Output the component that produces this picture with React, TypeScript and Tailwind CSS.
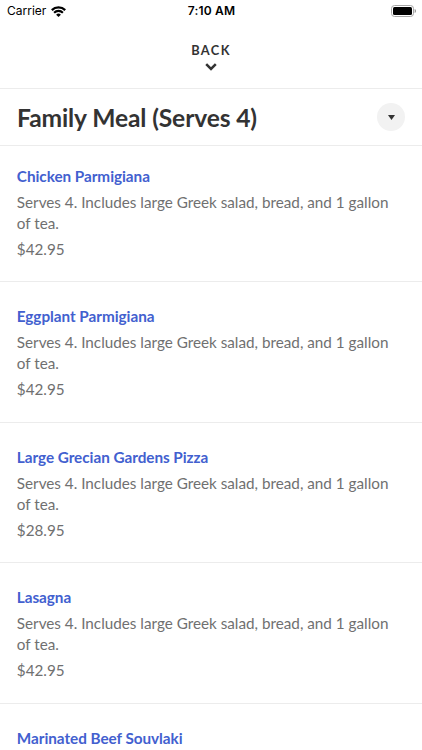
import React from "react";

interface MenuItem {
  name: string;
  description: string;
  price?: string;
}

const DESCRIPTION =
  "Serves 4. Includes large Greek salad, bread, and 1 gallon of tea.";

const MENU_ITEMS: MenuItem[] = [
  { name: "Chicken Parmigiana", description: DESCRIPTION, price: "$42.95" },
  { name: "Eggplant Parmigiana", description: DESCRIPTION, price: "$42.95" },
  { name: "Large Grecian Gardens Pizza", description: DESCRIPTION, price: "$28.95" },
  { name: "Lasagna", description: DESCRIPTION, price: "$42.95" },
  { name: "Marinated Beef Souvlaki", description: "" },
];

function WifiIcon() {
  return (
    <svg className="w-[15px] h-[11px]" viewBox="0 0 15 11" fill="none">
      <path d="M0.8 4.1a9.6 9.6 0 0 1 13.4 0" stroke="#000" strokeWidth="2.4" />
      <path d="M3.1 6.7a6.2 6.2 0 0 1 8.8 0" stroke="#000" strokeWidth="2.1" />
      <path d="M7.5 11L5.1 8.7a3.4 3.4 0 0 1 4.8 0z" fill="#000" />
    </svg>
  );
}

function BatteryIcon() {
  return (
    <svg className="w-[25px] h-[12px]" viewBox="0 0 25 12" fill="none">
      <rect x="0.5" y="0.5" width="22" height="11" rx="3" stroke="#a6a6a6" />
      <rect x="2" y="2" width="19" height="8" rx="1.5" fill="#000" />
      <path d="M23.7 4v4c.7-.3 1.2-1.1 1.2-2s-.5-1.7-1.2-2z" fill="#888" />
    </svg>
  );
}

function StatusBar() {
  return (
    <div className="grid grid-cols-3 items-center h-[22px] pl-[7px] pr-[6px] font-['Inter',sans-serif] text-[12px] text-black">
      <div className="flex items-center gap-[5px]">
        <span>Carrier</span>
        <WifiIcon />
      </div>
      <span className="text-center font-semibold tracking-[0.2px]">7:10 AM</span>
      <div className="flex justify-end">
        <BatteryIcon />
      </div>
    </div>
  );
}

function MenuRow({ name, description, price }: MenuItem) {
  return (
    <li className="h-[140.5px] pl-[16.8px] pr-[30px] pt-[24.1px] border-b border-[#ececec] first:h-[136px] first:pt-[19.7px] last:h-auto last:border-0">
      <h2 className="text-[15.3px] leading-[21px] font-bold tracking-[-0.04px] text-[#4260cf]">
        {name}
      </h2>
      {description && (
        <p className="mt-[5.2px] text-[15.25px] leading-[21px] text-[#707070]">
          {description}
        </p>
      )}
      {price && (
        <p className="mt-[5px] text-[15.25px] leading-[21px] text-[#707070]">
          {price}
        </p>
      )}
    </li>
  );
}

export default function App() {
  return (
    <div className="h-[750px] w-[422px] overflow-hidden bg-white font-['Lato',sans-serif]">
      <StatusBar />
      <button
        type="button"
        className="flex flex-col items-center w-full h-[67px] pt-5 border-b border-[#ececec] text-[#333]"
      >
        <span className="text-[12.8px] leading-[17px] font-bold tracking-[1.4px]">
          BACK
        </span>
        <svg className="mt-[4px] mr-px w-3 h-2" viewBox="0 0 12 8" fill="none">
          <path d="M1.2 1.2L6 6l4.8-4.8" stroke="#333" strokeWidth="2.5" />
        </svg>
      </button>
      <header className="flex items-center justify-between h-[57px] px-[17px] border-b border-[#ececec]">
        <h1 className="pt-0.5 text-[24.6px] font-bold tracking-[-0.12px] text-[#333]">
          Family Meal (Serves 4)
        </h1>
        <button
          type="button"
          className="flex items-center justify-center w-7 h-7 rounded-full bg-[#f2f2f2]"
        >
          <svg className="w-[7px] h-[5px]" viewBox="0 0 7 5">
            <path d="M0 0h7L3.5 5z" fill="#333" />
          </svg>
        </button>
      </header>
      <ul>
        {MENU_ITEMS.map((item) => (
          <MenuRow key={item.name} {...item} />
        ))}
      </ul>
    </div>
  );
}
